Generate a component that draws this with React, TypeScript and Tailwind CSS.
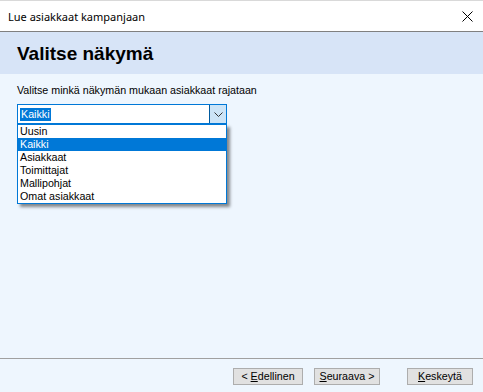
import { useState } from "react";

export default function App() {
  const views = ["Uusin", "Kaikki", "Asiakkaat", "Toimittajat", "Mallipohjat", "Omat asiakkaat"];
  const [selected] = useState("Kaikki");

  return (
    <div className="w-[483px] h-[392px] flex flex-col bg-[#eef6fe] overflow-hidden font-['Liberation_Sans',Arial,sans-serif] text-black">
      {/* title bar */}
      <div className="h-[31px] bg-white flex items-center justify-between pl-2 pr-[10px] border-t border-[#d9d9d9]">
        <span className="text-[11px] font-['Noto_Sans',sans-serif] leading-none">Lue asiakkaat kampanjaan</span>
        <svg width="11" height="11" viewBox="0 0 11 11" className="text-black">
          <path d="M0.5 0.5 L10.5 10.5 M10.5 0.5 L0.5 10.5" stroke="currentColor" strokeWidth="1" />
        </svg>
      </div>
      <div className="h-px bg-[#808080]" />

      {/* header band */}
      <div className="h-[42px] bg-[#d7e4f7] flex items-center pl-[17px]">
        <h1 className="text-[19px] font-bold leading-none">Valitse näkymä</h1>
      </div>

      {/* body */}
      <div className="flex-1 px-[17px] pt-[10px]">
        <p className="text-[10.7px] leading-[13px]">Valitse minkä näkymän mukaan asiakkaat rajataan</p>
        <div className="relative mt-[7px] w-[210px]">
          <div className="h-[20px] flex border border-[#0078d7] bg-white">
            <div className="flex-1 flex items-center pl-[2px]">
              <span className="bg-[#0078d7] text-white text-[10.7px] leading-[13px] px-px">{selected}</span>
            </div>
            <div className="w-[17px] bg-[#cce4f7] border-l border-[#005a9e] flex items-center justify-center">
              <svg width="9" height="5" viewBox="0 0 9 5">
                <path d="M0.5 0.5 L4.5 4.5 L8.5 0.5" fill="none" stroke="#333" strokeWidth="1" />
              </svg>
            </div>
          </div>
          <ul className="absolute left-0 top-[20px] w-[210px] bg-white border border-[#0078d7] shadow-[3px_3px_3px_rgba(0,0,0,0.45)]">
            {views.map((v) => (
              <li
                key={v}
                className={
                  v === selected
                    ? "h-[13px] pl-[2px] text-[10.7px] leading-[13px] bg-[#0078d7] text-white"
                    : "h-[13px] pl-[2px] text-[10.7px] leading-[13px]"
                }
              >
                {v}
              </li>
            ))}
          </ul>
        </div>
      </div>

      {/* footer */}
      <div className="h-[34px] border-t border-[#a0a0a0] flex items-start pt-[9px] pr-[10px] justify-end">
        <button className="w-[70px] h-[17px] bg-[#e1e1e1] border border-[#adadad] text-[10.7px] leading-none">
          &lt; <span className="underline">E</span>dellinen
        </button>
        <button className="ml-[11px] w-[66px] h-[17px] bg-[#e1e1e1] border border-[#adadad] text-[10.7px] leading-none">
          <span className="underline">S</span>euraava &gt;
        </button>
        <button className="ml-[27px] w-[66px] h-[17px] bg-[#e1e1e1] border border-[#adadad] text-[10.7px] leading-none">
          <span className="underline">K</span>eskeytä
        </button>
      </div>
    </div>
  );
}
